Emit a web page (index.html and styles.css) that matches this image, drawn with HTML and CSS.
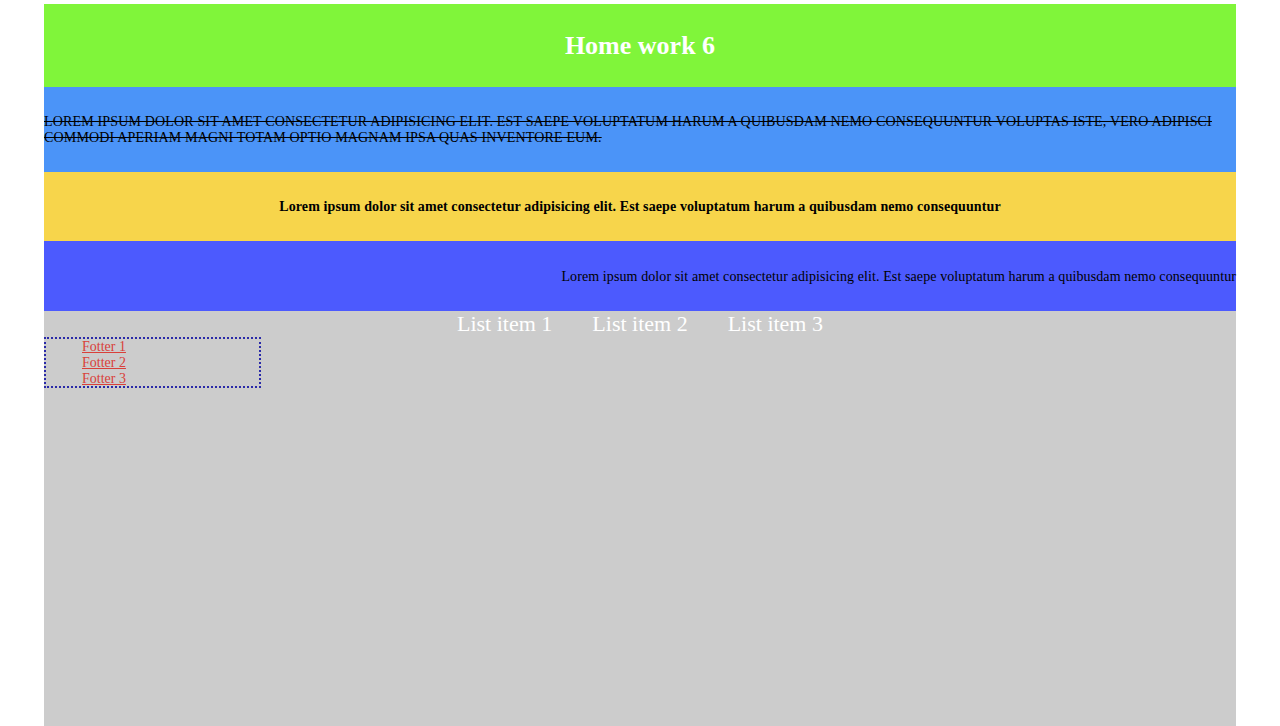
FILE: index.html
```html
<!DOCTYPE html>
<html lang="en">
<head>
    <meta charset="UTF-8">
    <meta name="viewport" content="width=device-width, initial-scale=1.0">
    <title>Home work 6</title>
    <link rel="stylesheet" href="styles.css">
</head>
<body>
    <div class="wrapper">
        <header class="header">
            <h1>Home work 6</h1>
        </header>

        <section class="block block-upper">
            <p>Lorem ipsum dolor sit amet consectetur adipisicing elit. Est saepe voluptatum harum a quibusdam nemo consequuntur voluptas iste, vero adipisci commodi aperiam magni totam optio magnam ipsa quas inventore eum.</p>
        </section>

        <section class="block block-center">
            <p>Lorem ipsum dolor sit amet consectetur adipisicing elit. Est saepe voluptatum harum a quibusdam nemo consequuntur</p>
        </section>

        <section class="block block-right">
            <p>Lorem ipsum dolor sit amet consectetur adipisicing elit. Est saepe voluptatum harum a quibusdam nemo consequuntur</p>
        </section>

        <ul class="menu">
            <li>List item 1</li>
            <li>List item 2</li>
            <li>List item 3</li>
        </ul>

        <footer class="footer">
            <ul>
                <li><a href="#">Fotter 1</a></li>
                <li><a href="#">Fotter 2</a></li>
                <li><a href="#">Fotter 3</a></li>
            </ul>
        </footer>
    </div>
</body>
</html>
```

FILE: styles.css
```css
/* General */
body {
    margin: 0;
    font-family: "Liberation Serif", "Times New Roman", serif;
    background-color: #ffffff;
}

.wrapper {
    width: 1192px;
    margin: 4px auto 0;
    min-height: 100vh;
    background-color: #cccccc;
}

/* Header */
.header {
    height: 83px;
    background-color: #80f53a;
    display: flex;
    align-items: center;
    justify-content: center;
}

.header h1 {
    margin: 0;
    font-size: 26px;
    color: #ffffff;
}

/* Blocks */
.block p {
    margin: 0;
}

.block-upper {
    background-color: #4b94f8;
    padding: 27px 0 26px;
}

.block-upper p {
    font-size: 14px;
    line-height: 16px;
    letter-spacing: 0.16px;
    text-transform: uppercase;
    text-decoration: line-through;
    color: #000000;
}

.block-center {
    background-color: #f7d54b;
    height: 69px;
    display: flex;
    align-items: center;
    justify-content: center;
}

.block-center p {
    font-size: 14px;
    font-weight: bold;
    letter-spacing: 0.1px;
}

.block-right {
    background-color: #4c5afe;
    height: 70px;
    display: flex;
    align-items: center;
    justify-content: flex-end;
}

.block-right p {
    font-size: 14px;
    letter-spacing: 0.1px;
    white-space: nowrap;
    padding-top: 2px;
}

/* Menu */
.menu {
    list-style: none;
    margin: 0;
    padding: 0;
    height: 26px;
    display: flex;
    justify-content: center;
    gap: 40px;
    font-size: 22px;
    line-height: 26px;
    color: #ffffff;
}

/* Footer */
.footer {
    width: 213px;
    border: 2px dotted #2a2aa8;
}

.footer ul {
    margin: 0;
    padding: 0 0 0 36px;
    list-style: none;
    font-size: 14px;
    line-height: 16px;
    height: 47px;
}

.footer a {
    color: #d9403a;
}
```
